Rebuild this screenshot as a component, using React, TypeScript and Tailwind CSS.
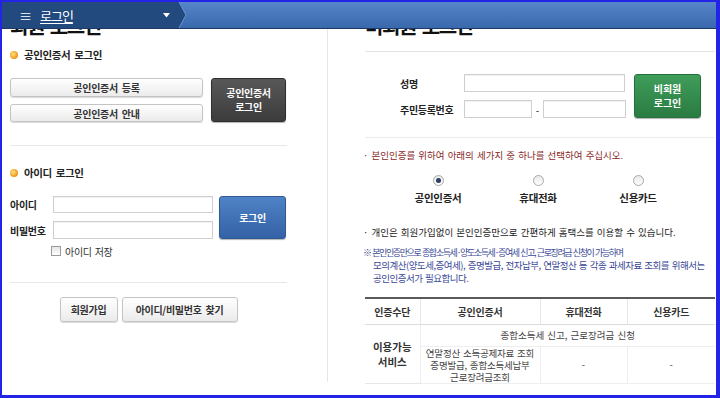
import React from "react";

const Bullet = () => (
  <span className="inline-block w-[8px] h-[8px] rounded-full bg-[radial-gradient(circle_at_40%_40%,#ffe08a,#f0a020_60%,#c98010)] shrink-0" />
);

const LightBtn = ({ children, className = "" }: { children: React.ReactNode; className?: string }) => (
  <div
    className={
      "flex items-center justify-center rounded-[3px] border border-[#c4c4c4] bg-linear-to-b from-white to-[#ebebeb] shadow-[0_1px_1px_rgba(0,0,0,0.15)] text-[10px] tracking-[-0.3px] [word-spacing:2px] font-bold text-[#333] whitespace-nowrap " +
      className
    }
  >
    {children}
  </div>
);

const Input = ({ className = "" }: { className?: string }) => (
  <div className={"border border-[#cfcfcf] bg-white shadow-[inset_0_1px_1px_rgba(0,0,0,0.06)] " + className} />
);

const Radio = ({ checked }: { checked?: boolean }) => (
  <span className="w-[11px] h-[11px] rounded-full border border-[#a9a9a9] bg-linear-to-b from-[#e9e9e9] to-white flex items-center justify-center">
    {checked && <span className="w-[5px] h-[5px] rounded-full bg-[#2d3f66]" />}
  </span>
);

function TopBar() {
  return (
    <div className="h-[27px] shrink-0 flex bg-linear-to-b from-[#5686c9] to-[#3a68ad] border-b border-[#1d3a66]">
      <div className="w-[176px] bg-[#234a7f] flex items-center text-white">
        <span className="ml-[17px] text-[13px] leading-none">≡</span>
        <span className="ml-[8px] text-[13px] leading-none underline underline-offset-2 tracking-[-1px]">로그인</span>
        <svg className="ml-auto mr-[8px]" width="7" height="5" viewBox="0 0 7 5">
          <path d="M0 0 L7 0 L3.5 4.5 Z" fill="#ffffff" />
        </svg>
      </div>
      <svg width="9" height="26" viewBox="0 0 9 26" className="shrink-0">
        <path d="M0 0 L1 0 L8 13 L1 26 L0 26 Z" fill="#234a7f" />
        <path d="M1 0 L8 13 L1 26" stroke="#6b95d0" strokeWidth="1" fill="none" />
      </svg>
    </div>
  );
}

function LeftPanel() {
  return (
    <div className="w-[326px] h-[353px] shrink-0 border-r border-[#e6e6e6] pl-[8px] flex flex-col">
      <div className="h-[22px] -mt-[14px] text-[20px] leading-[22px] font-bold tracking-[-1.5px] [word-spacing:3px] text-[#111] whitespace-nowrap">회원 로그인</div>
      <div className="mt-[11px] h-[14px] flex items-center gap-[6px]">
        <Bullet />
        <span className="text-[10.5px] font-bold tracking-[-0.4px] [word-spacing:2px] text-[#222]">공인인증서 로그인</span>
      </div>
      <div className="mt-[16px] flex gap-[8px]">
        <div className="w-[193px] flex flex-col gap-[7px]">
          <LightBtn className="h-[19px]">공인인증서 등록</LightBtn>
          <LightBtn className="h-[18px]">공인인증서 안내</LightBtn>
        </div>
        <div className="w-[75px] h-[44px] rounded-[3px] border border-[#2e2e2e] bg-linear-to-b from-[#585858] to-[#3c3c3c] shadow-[0_1px_1px_rgba(0,0,0,0.3)] flex items-center justify-center text-center text-white font-bold text-[10px] leading-[14px] tracking-[-0.3px]">
          공인인증서
          <br />
          로그인
        </div>
      </div>
      <div className="mt-[23px] w-[277px] h-px bg-[#e8e8e8]" />
      <div className="mt-[20px] h-[14px] flex items-center gap-[6px]">
        <Bullet />
        <span className="text-[10.5px] font-bold tracking-[-0.4px] [word-spacing:2px] text-[#222]">아이디 로그인</span>
      </div>
      <div className="mt-[16px] flex">
        <div className="flex flex-col gap-[8px]">
          <div className="flex items-center h-[17px]">
            <span className="w-[43px] text-[10px] font-bold tracking-[-0.3px]">아이디</span>
            <Input className="w-[160px] h-[17px]" />
          </div>
          <div className="flex items-center h-[18px]">
            <span className="w-[43px] text-[10px] font-bold tracking-[-0.3px]">비밀번호</span>
            <Input className="w-[160px] h-[18px]" />
          </div>
        </div>
        <div className="ml-[6px] w-[67px] h-[43px] rounded-[3px] border border-[#2f5a96] bg-linear-to-b from-[#4f82c6] to-[#3462a6] shadow-[0_1px_1px_rgba(0,0,0,0.3)] flex items-center justify-center text-white font-bold text-[10px] tracking-[-0.3px]">
          로그인
        </div>
      </div>
      <div className="mt-[6px] ml-[41px] h-[12px] flex items-center gap-[4px]">
        <span className="w-[10px] h-[10px] border border-[#9a9a9a] bg-linear-to-b from-[#e6e6e6] to-white" />
        <span className="text-[10px] tracking-[-0.3px] [word-spacing:1px] text-[#333]">아이디 저장</span>
      </div>
      <div className="mt-[25px] w-[277px] h-px bg-[#e8e8e8]" />
      <div className="mt-[14px] w-[277px] flex justify-center gap-[4px]">
        <LightBtn className="w-[58px] h-[25px]">회원가입</LightBtn>
        <LightBtn className="w-[116px] h-[25px]">아이디/비밀번호 찾기</LightBtn>
      </div>
    </div>
  );
}

function RightPanel() {
  const body = "text-[9.5px] tracking-[0px] [word-spacing:1px] whitespace-nowrap";
  return (
    <div className="flex-1 pl-[37px] pr-[1px] flex flex-col">
      <div className="h-[22px] -mt-[14px] text-[20px] leading-[22px] font-bold tracking-[-1.5px] [word-spacing:3px] text-[#111] whitespace-nowrap">비회원 로그인</div>
      <div className="mt-[14px] w-[350px] h-px bg-[#e3e3e3]" />
      <div className="mt-[22px] ml-[35px] flex">
        <div className="flex flex-col gap-[8px]">
          <div className="flex items-center h-[18px]">
            <span className="w-[64px] text-[10px] font-bold tracking-[-0.3px]">성명</span>
            <Input className="w-[161px] h-[18px]" />
          </div>
          <div className="flex items-center h-[18px]">
            <span className="w-[64px] text-[10px] font-bold tracking-[-0.3px] whitespace-nowrap">주민등록번호</span>
            <Input className="w-[68px] h-[18px]" />
            <span className="w-[11px] text-center text-[10px]">-</span>
            <Input className="w-[83px] h-[18px]" />
          </div>
        </div>
        <div className="ml-[8px] w-[67px] h-[44px] rounded-[3px] border border-[#23703a] bg-linear-to-b from-[#3f9d5a] to-[#2a7c42] shadow-[0_1px_1px_rgba(0,0,0,0.3)] flex items-center justify-center text-center text-white font-bold text-[10px] leading-[14px] tracking-[0px]">
          비회원
          <br />
          로그인
        </div>
      </div>
      <div className="mt-[19px] w-[350px] h-px bg-[#ececec]" />
      <div className={"mt-[10px] -ml-[2px] h-[14px] flex items-center text-[#8a1f1f] " + body}>
        · 본인인증를 위하여 아래의 세가지 중 하나를 선택하여 주십시오.
      </div>
      <div className="mt-[13px] ml-[23px] grid grid-cols-[100px_100px_100px]">
        {[
          ["공인인증서", true],
          ["휴대전화", false],
          ["신용카드", false],
        ].map(([label, checked]) => (
          <div key={label as string} className="flex flex-col items-center">
            <Radio checked={checked as boolean} />
            <span className="mt-[5px] h-[14px] flex items-center text-[10.5px] font-bold tracking-[-0.3px] text-[#222]">
              {label as string}
            </span>
          </div>
        ))}
      </div>
      <div className={"mt-[20px] -ml-[2px] h-[14px] flex items-center text-[#222] " + body}>
        · 개인은 회원가입없이 본인인증만으로 간편하게 홈택스를 이용할 수 있습니다.
      </div>
      <div className="mt-[7px] -ml-[2px] leading-[13px] text-[#3a4896] text-[9.5px] tracking-[-0.5px] [word-spacing:1px] whitespace-nowrap">
        <div className="text-[9px] tracking-[-1.4px]">※ 본인인증만으로 종합소득세·양도소득세·증여세 신고, 근로장려금 신청이 가능하며</div>
        <div className="pl-[10px]">모의계산(양도세,증여세), 증명발급, 전자납부, 연말정산 등 각종 과세자료 조회를 위해서는</div>
        <div className="pl-[10px]">공인인증서가 필요합니다.</div>
      </div>
      <table className="mt-[12px] w-[350px] border-collapse table-fixed text-center text-[9.5px] tracking-[0px] [word-spacing:1px]">
        <colgroup>
          <col className="w-[55px]" />
          <col className="w-[120px]" />
          <col className="w-[87px]" />
          <col className="w-[88px]" />
        </colgroup>
        <thead>
          <tr className="h-[26px] border-t-2 border-[#5a5a5a]">
            {["인증수단", "공인인증서", "휴대전화", "신용카드"].map((h, i) => (
              <th
                key={h}
                className={
                  "font-bold text-[10px] tracking-[-0.2px] text-[#333] border-b border-[#dcdcdc] " +
                  (i > 0 ? "border-l border-l-[#e6e6e6]" : "")
                }
              >
                {h}
              </th>
            ))}
          </tr>
        </thead>
        <tbody className="text-[#444]">
          <tr className="h-[22px]">
            <td rowSpan={2} className="font-bold text-[10.5px] leading-[15px] tracking-[0px] text-[#333] border-b border-[#e6e6e6]">
              이용가능
              <br />
              서비스
            </td>
            <td colSpan={3} className="border-l border-b border-[#eeeeee]">
              종합소득세 신고, 근로장려금 신청
            </td>
          </tr>
          <tr className="h-[37px]">
            <td className="border-l border-b border-[#eeeeee] leading-[12px] tracking-[-0.2px] whitespace-nowrap">
              연말정산 소득공제자료 조회
              <br />
              증명발급, 종합소득세납부
              <br />
              근로장려금조회
            </td>
            <td className="border-l border-b border-[#eeeeee]">-</td>
            <td className="border-l border-b border-[#eeeeee]">-</td>
          </tr>
        </tbody>
      </table>
    </div>
  );
}

export default function App() {
  return (
    <div className="w-[720px] h-[398px] overflow-hidden bg-white border-l-2 border-t-2 border-r-4 border-b-[3px] border-[#2424e6] flex flex-col font-['Noto_Sans_CJK_KR','Noto_Sans',sans-serif] text-[#222]">
      <TopBar />
      <div className="flex-1 flex overflow-hidden min-h-0">
        <LeftPanel />
        <RightPanel />
      </div>
    </div>
  );
}
